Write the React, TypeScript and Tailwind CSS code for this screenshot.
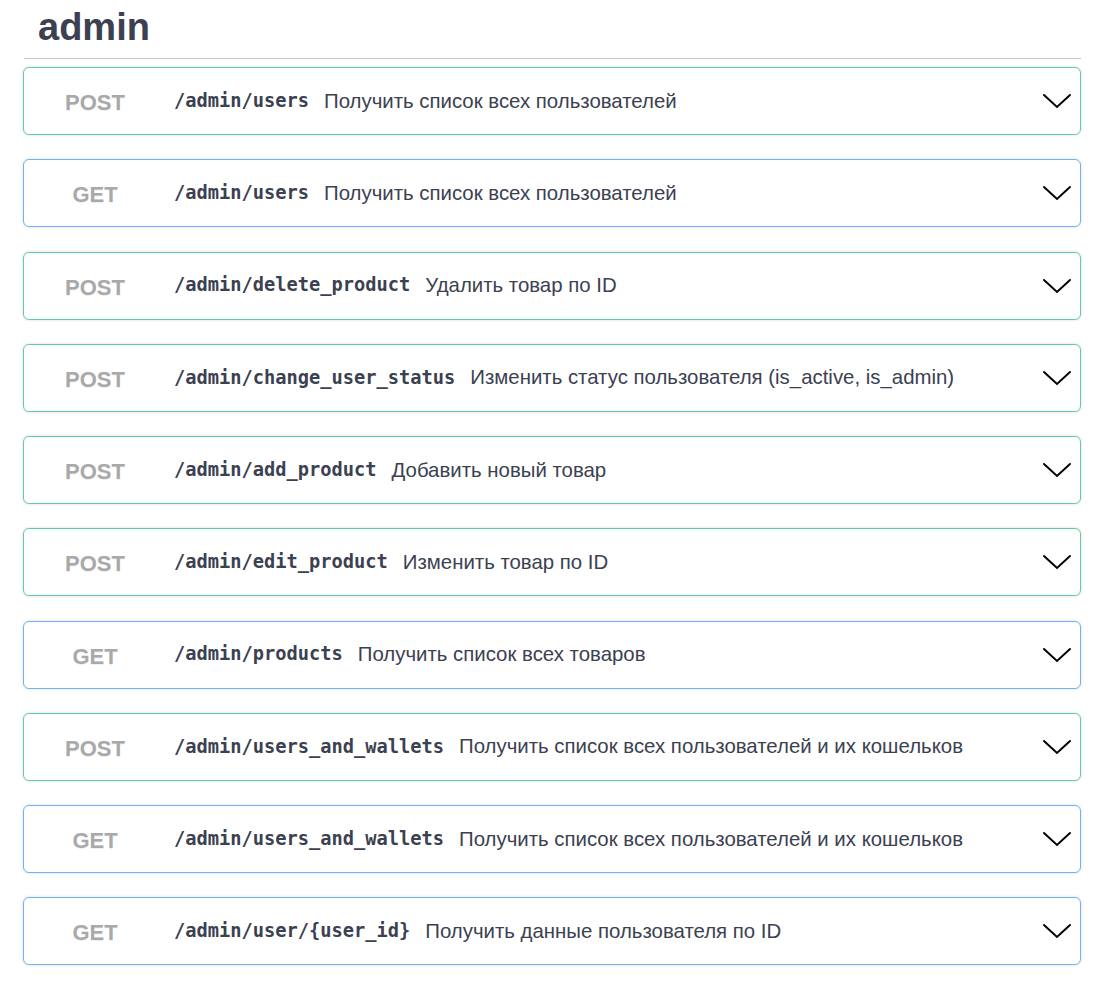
const endpoints = [
  { method: "POST", path: "/admin/users", summary: "Получить список всех пользователей" },
  { method: "GET", path: "/admin/users", summary: "Получить список всех пользователей" },
  { method: "POST", path: "/admin/delete_product", summary: "Удалить товар по ID" },
  { method: "POST", path: "/admin/change_user_status", summary: "Изменить статус пользователя (is_active, is_admin)" },
  { method: "POST", path: "/admin/add_product", summary: "Добавить новый товар" },
  { method: "POST", path: "/admin/edit_product", summary: "Изменить товар по ID" },
  { method: "GET", path: "/admin/products", summary: "Получить список всех товаров" },
  { method: "POST", path: "/admin/users_and_wallets", summary: "Получить список всех пользователей и их кошельков" },
  { method: "GET", path: "/admin/users_and_wallets", summary: "Получить список всех пользователей и их кошельков" },
  { method: "GET", path: "/admin/user/{user_id}", summary: "Получить данные пользователя по ID" },
]

function Chevron() {
  return (
    <svg width="30" height="16" viewBox="0 0 30 16" fill="none" className="shrink-0">
      <path d="M2 2 L15 14 L28 2" stroke="#000" strokeWidth="2" strokeLinecap="round" strokeLinejoin="miter" />
    </svg>
  )
}

export default function App() {
  return (
    <div className="min-h-screen bg-white font-['Liberation_Sans',Arial,sans-serif] text-[#3b4151]">
      <div className="px-[23px] pt-[4px]">
        <h3 className="ml-[15px] text-[38px] font-bold leading-[46px] text-[#3b4151]">admin</h3>
        <div className="mt-[8px] h-px bg-[#c8c9cc] ml-px mr-[7px]" />
        <div className="mt-[8px] mr-[7px] flex flex-col gap-[24.25px]">
          {endpoints.map((e, i) => (
            <div
              key={i}
              className={
                "flex h-[68px] items-center rounded-[6px] border-[1.5px] bg-white pl-[21px] pr-[7px] shadow-[0_0_3px_rgba(0,0,0,0.15)] " +
                (e.method === "POST" ? "border-[#5fd09c]" : "border-[#70b4f8]")
              }
            >
              <span className="w-[100px] shrink-0 pt-[3px] text-center text-[22px] font-bold text-[#a9a9a9] [text-shadow:0_1px_0_rgba(0,0,0,0.08)]">
                {e.method}
              </span>
              <span className="ml-[29px] font-['DejaVu_Sans_Mono',monospace] text-[18.7px] font-bold text-[#3b4151]">
                {e.path}
              </span>
              <span className="ml-[15px] text-[20.4px] text-[#3b4151]">{e.summary}</span>
              <div className="ml-auto pr-[1px]">
                <Chevron />
              </div>
            </div>
          ))}
        </div>
      </div>
    </div>
  )
}
